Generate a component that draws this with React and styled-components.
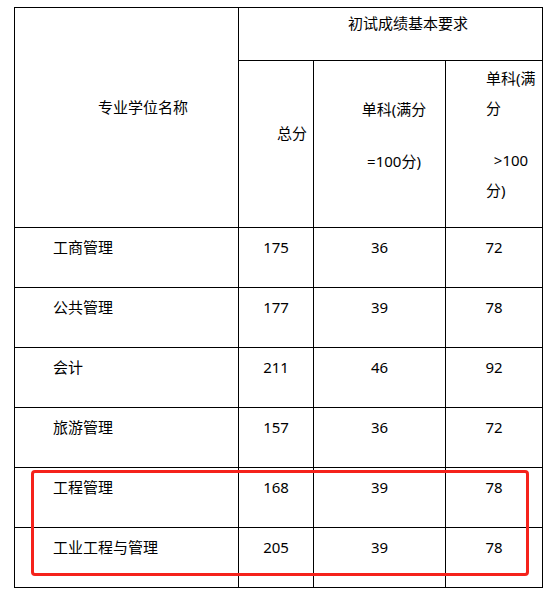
import styled, { createGlobalStyle } from "styled-components";

const GlobalStyle = createGlobalStyle`
  html, body {
    margin: 0;
    padding: 0;
    background: #fff;
  }
  body {
    font-family: "Noto Sans", "Noto Sans CJK SC", sans-serif;
    color: #000;
  }
`;

const rows = [
  { name: "工商管理", total: 175, single: 36, over: 72 },
  { name: "公共管理", total: 177, single: 39, over: 78 },
  { name: "会计", total: 211, single: 46, over: 92 },
  { name: "旅游管理", total: 157, single: 36, over: 72 },
  { name: "工程管理", total: 168, single: 39, over: 78 },
  { name: "工业工程与管理", total: 205, single: 39, over: 78 },
];

const App = () => {
  return (
    <>
      <GlobalStyle />
      <Page>
        <Frame>
          <Table>
            <colgroup>
              <col style={{ width: 224 }} />
              <col style={{ width: 75 }} />
              <col style={{ width: 132 }} />
              <col style={{ width: 97 }} />
            </colgroup>
            <tbody>
              <tr>
                <Cell rowSpan={2} $pad="0 0 0 83px" $h={52}>
                  <P>专业学位名称</P>
                </Cell>
                <Cell colSpan={3} $pad="0 0 0 109px" $h={52}>
                  <P>初试成绩基本要求</P>
                </Cell>
              </tr>
              <tr>
                <Cell $align="right" $pad="0 6px 0 0" $h={167}>
                  <P>总分</P>
                </Cell>
                <Cell $align="center" $pad="3px 0 0 29px" $h={167}>
                  <P>单科(满分</P>
                  <P>=100分)</P>
                </Cell>
                <Cell $pad="1px 0 0 40px" $h={167}>
                  <P>
                    单科(满
                    <br />
                    分
                  </P>
                  <P>
                    &nbsp;&nbsp;&gt;100
                    <br />
                    分)
                  </P>
                </Cell>
              </tr>
              {rows.map((r) => (
                <tr key={r.name}>
                  <Cell $pad="1px 0 0 38px" $h={60}>
                    <P>{r.name}</P>
                  </Cell>
                  <Cell $align="center" $pad="1px 0 0" $h={60}>
                    <P>{r.total}</P>
                  </Cell>
                  <Cell $align="center" $pad="1px 0 0" $h={60}>
                    <P>{r.single}</P>
                  </Cell>
                  <Cell $align="center" $pad="1px 0 0" $h={60}>
                    <P>{r.over}</P>
                  </Cell>
                </tr>
              ))}
            </tbody>
          </Table>
          <Highlight />
        </Frame>
      </Page>
    </>
  );
};

export default App;

const Page = styled.div`
  padding: 7px 0 0 14px;
`;

const Frame = styled.div`
  position: relative;
  width: 529px;
`;

const Table = styled.table`
  border-collapse: collapse;
  table-layout: fixed;
  width: 529px;
  font-size: 15px;
`;

const Cell = styled.td`
  border: 1px solid #000;
  padding: ${(p) => p.$pad || "0"};
  height: ${(p) => p.$h}px;
  text-align: ${(p) => p.$align || "left"};
  vertical-align: middle;
  box-sizing: border-box;
`;

const P = styled.p`
  margin: 0 0 22px;
  line-height: 30px;
  white-space: nowrap;
`;

const Highlight = styled.div`
  position: absolute;
  left: 17px;
  top: 463px;
  width: 498px;
  height: 106px;
  border: 3px solid #f5221b;
  border-radius: 4px;
  box-sizing: border-box;
  pointer-events: none;
`;
